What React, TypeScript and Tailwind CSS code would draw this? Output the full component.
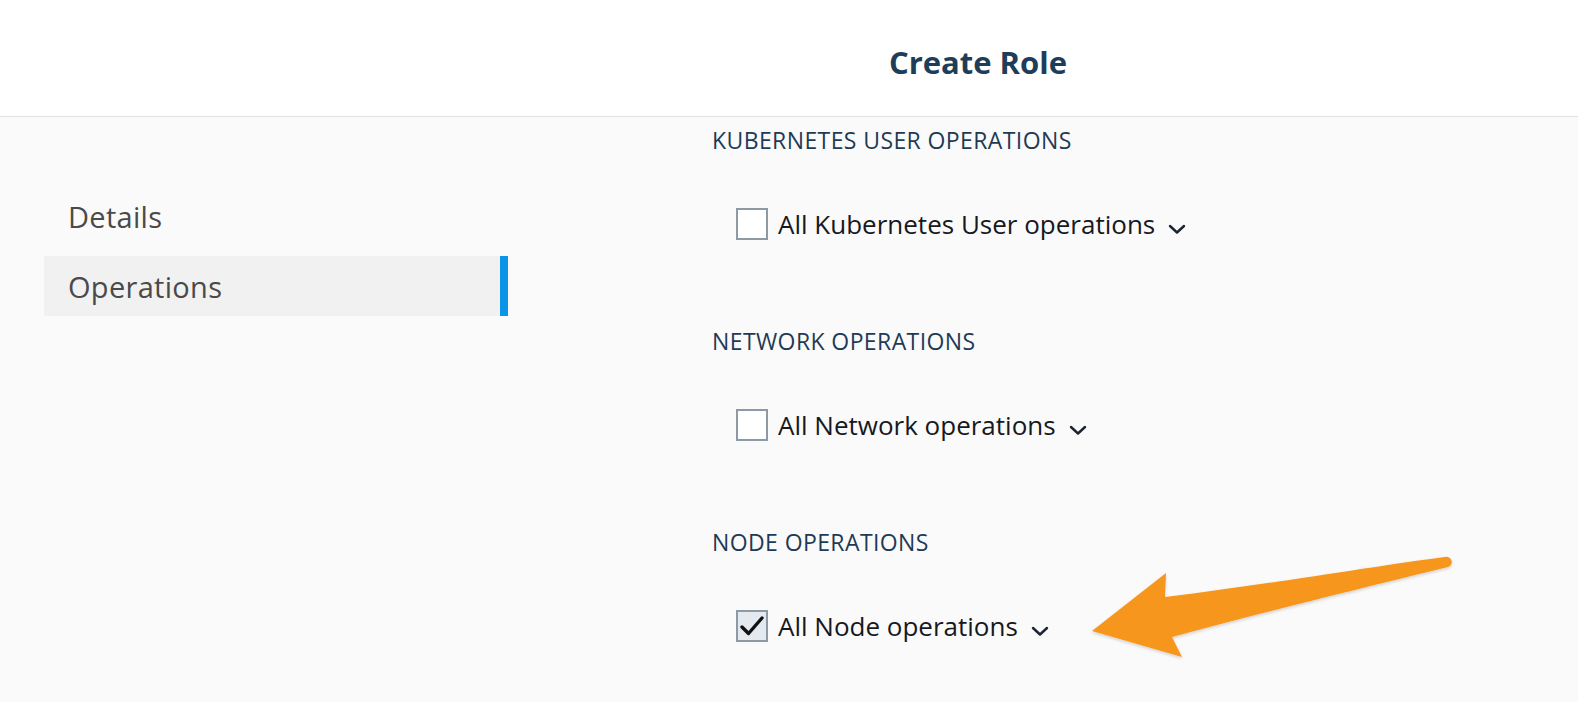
import React from "react";

const Chevron = () => (
  <svg width="20" height="12" viewBox="0 0 20 12" className="mt-[10px]">
    <path d="M3 3 L10 9.5 L17 3" fill="none" stroke="#1b2530" strokeWidth="2.4" strokeLinecap="round" strokeLinejoin="round" />
  </svg>
);

const Row = ({ label, checked }: { label: string; checked?: boolean }) => (
  <div className="flex items-center h-[32px] pl-[24px]">
    <div
      className={
        "w-[32px] h-[32px] border-2 border-[#8e99a6] flex items-center justify-center " +
        (checked ? "bg-[#e4e9ef]" : "bg-white")
      }
    >
      {checked && (
        <svg width="26" height="24" viewBox="0 0 26 24">
          <path d="M3 13 L9.5 19.5 L23 4" fill="none" stroke="#111" strokeWidth="3.4" strokeLinecap="round" strokeLinejoin="round" />
        </svg>
      )}
    </div>
    <span className="ml-[10px] text-[26px] text-[#16191d] leading-none">{label}</span>
    <span className="ml-[12px]">
      <Chevron />
    </span>
  </div>
);

const Section = ({ title, label, checked, first }: { title: string; label: string; checked?: boolean; first?: boolean }) => (
  <div className={first ? "" : "mt-[86px]"}>
    <div className="h-[30px] leading-[30px] text-[23px] tracking-[0.4px] text-[#1f3a55]">{title}</div>
    <div className="mt-[53px]">
      <Row label={label} checked={checked} />
    </div>
  </div>
);

export default function App() {
  return (
    <div className="relative w-[1578px] h-[702px] overflow-hidden bg-[#fafafa] font-['Open_Sans',sans-serif]">
      <header className="h-[117px] bg-white border-b border-[#e0e0e0] flex items-center justify-center pl-[378px] pt-[8px]">
        <h1 className="text-[31px] font-bold text-[#1e3d58]">Create Role</h1>
      </header>
      <div className="flex">
        <aside className="w-[508px] pl-[44px] pt-[70px]">
          <div className="h-[60px] flex items-center pl-[24px] text-[29px] tracking-[0.3px] text-[#4a4a4a]">Details</div>
          <div className="mt-[9px] h-[60px] flex items-center pl-[24px] pt-[2px] text-[29px] tracking-[0.3px] text-[#4a4a4a] bg-[#f1f1f1] border-r-[8px] border-[#0a95e8]">
            Operations
          </div>
        </aside>
        <main className="pl-[204px] pt-[8px]">
          <Section first title="KUBERNETES USER OPERATIONS" label="All Kubernetes User operations" />
          <Section title="NETWORK OPERATIONS" label="All Network operations" />
          <Section title="NODE OPERATIONS" label="All Node operations" checked />
        </main>
      </div>
      <svg className="absolute left-0 top-0 pointer-events-none" width="1578" height="702" viewBox="0 0 1578 702">
        <defs>
          <filter id="sh" x="-10%" y="-30%" width="120%" height="160%">
            <feDropShadow dx="0" dy="1.5" stdDeviation="1.5" floodColor="#000" floodOpacity="0.18" />
          </filter>
        </defs>
        <path
          filter="url(#sh)"
          fill="#f7961f"
          d="M1092 631 L1166 573 L1165 597 C1265 585 1375 566 1445 557 A5 5 0 0 1 1448 567 C1370 586 1265 612 1172 637 L1182 657 Z"
        />
      </svg>
    </div>
  );
}
